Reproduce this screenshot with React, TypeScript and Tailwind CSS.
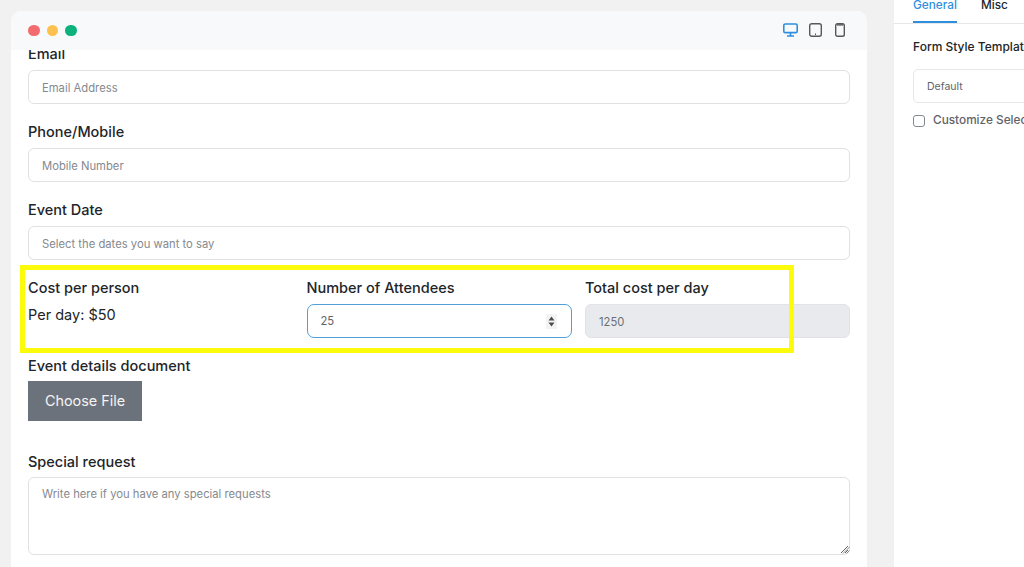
import React from 'react';

const inputClass =
  'block w-full h-[34px] px-[13px] pt-[1px] bg-white border border-[#dfe1e5] rounded-[6px] text-[11.25px] text-[#6b7075] placeholder:text-[#85898e] outline-none';
const labelClass = 'block h-[20px] leading-[20px] mb-[6px] text-[14.5px] font-medium text-[#212529]';

const fields = [
  { label: 'Email', placeholder: 'Email Address' },
  { label: 'Phone/Mobile', placeholder: 'Mobile Number' },
  { label: 'Event Date', placeholder: 'Select the dates you want to say' },
];

const App: React.FC = () => {
  return (
    <div className="relative flex h-[567px] w-[1024px] overflow-hidden bg-[#f1f1f1] font-['Inter',sans-serif]">
      <main className="ml-[11px] mt-[11px] flex w-[856px] flex-col rounded-t-[10px] bg-white">
        <header className="flex h-[39px] shrink-0 items-center justify-between rounded-t-[10px] bg-[#f8f9fa] pl-[17px] pr-[22px]">
          <div className="flex gap-[7px]">
            <span className="h-[11.5px] w-[11.5px] rounded-full bg-[#f26b6f]" />
            <span className="h-[11.5px] w-[11.5px] rounded-full bg-[#fcc14e]" />
            <span className="h-[11.5px] w-[11.5px] rounded-full bg-[#0bb27a]" />
          </div>
          <div className="-mt-[1px] flex items-center">
            <svg width="15" height="14" viewBox="0 0 15 14" fill="none" stroke="#2f8fdc" strokeWidth="1.6">
              <rect x="0.8" y="1" width="13.4" height="8.6" rx="1.4" />
              <path d="M7.5 9.6v3M4 13h7" />
            </svg>
            <svg className="ml-[11px]" width="13" height="14" viewBox="0 0 13 14" fill="none" stroke="#55595e" strokeWidth="1.4">
              <rect x="0.7" y="0.7" width="11.6" height="12.6" rx="2" />
              <path d="M6 11.2h1" />
            </svg>
            <svg className="ml-[13px]" width="10" height="14" viewBox="0 0 10 14" fill="none" stroke="#55595e" strokeWidth="1.4">
              <rect x="0.7" y="0.7" width="8.6" height="12.6" rx="1.8" />
              <path d="M2 1.9h6" />
            </svg>
          </div>
        </header>

        <div className="flex-1 overflow-hidden px-[17px]">
          <form className="-mt-[6px]">
            {fields.map((field) => (
              <div key={field.label} className="mb-[18px]">
                <label className={labelClass}>{field.label}</label>
                <input className={inputClass} placeholder={field.placeholder} />
              </div>
            ))}

            <div className="mb-[18px] grid grid-cols-3 gap-[13.5px]">
              <div>
                <label className={labelClass}>Cost per person</label>
                <p className="text-[14.5px] leading-[22px] text-[#212529]">Per day: $50</p>
              </div>
              <div>
                <label className={labelClass}>Number of Attendees</label>
                <div className="flex h-[34px] items-center justify-between rounded-[7px] border border-[#4f9fd8] bg-white pl-[13px] pr-[14px] pt-[1px] text-[11.25px] text-[#5f6368]">
                  <span>25</span>
                  <svg width="11" height="15" viewBox="0 0 11 15">
                    <rect width="11" height="15" fill="#f3f3f3" />
                    <path d="M5.5 2.5 8.5 6.5h-6zM5.5 12.5 2.5 8.5h6z" fill="#4a4d50" />
                  </svg>
                </div>
              </div>
              <div>
                <label className={labelClass}>Total cost per day</label>
                <input
                  className="block h-[34px] w-full rounded-[6px] border border-[#e2e3e7] bg-[#e9eaee] px-[13px] pt-[1px] text-[11.25px] text-[#6b7075] outline-none"
                  value="1250"
                  disabled
                  readOnly
                />
              </div>
            </div>

            <div className="mb-[31px]">
              <label className="mb-[5px] block h-[20px] text-[14.5px] font-medium leading-[20px] text-[#212529]">
                Event details document
              </label>
              <button
                type="button"
                className="h-[40px] w-[114px] bg-[#6c727b] text-[14.4px] text-[#f4f4f5]"
              >
                Choose File
              </button>
            </div>

            <div>
              <label className="mb-[5px] block h-[20px] text-[14.5px] font-medium leading-[20px] text-[#212529]">
                Special request
              </label>
              <textarea
                className="block h-[78px] w-full rounded-[6px] border border-[#dfe1e5] bg-white px-[13px] py-[8px] text-[11.25px] placeholder:text-[#85898e] outline-none"
                placeholder="Write here if you have any special requests"
              />
            </div>
          </form>
        </div>
      </main>

      <aside className="ml-[27px] flex-1 overflow-hidden bg-white">
        <div className="flex h-[24px] items-end gap-[24px] whitespace-nowrap border-b border-[#e5e7eb] pl-[19px] text-[11.8px] font-medium">
          <span className="h-[22px] border-b-2 border-[#2f8fdc] text-[#2f8fdc]">
            <span className="relative -top-[5px] block leading-[18px]">General</span>
          </span>
          <span className="h-[22px] text-[#212529]">
            <span className="relative -top-[5px] block leading-[18px]">Misc</span>
          </span>
        </div>
        <div className="w-[200px] pl-[19px] pt-[15px]">
          <p className="h-[16px] whitespace-nowrap text-[12px] font-medium leading-[16px] text-[#212529]">
            Form Style Template
          </p>
          <div className="mt-[14px] flex h-[34px] w-[181px] items-center rounded-l-[5px] border border-[#e5e7eb] px-[13px] pt-[1px] text-[10.5px] text-[#5f6368]">
            Default
          </div>
          <label className="mt-[9px] flex items-center gap-[8px] whitespace-nowrap text-[11.8px] font-medium text-[#5f6368]">
            <span className="h-[12px] w-[12px] shrink-0 rounded-[3px] border border-[#85898e]" />
            Customize Selected Form
          </label>
        </div>
      </aside>

      <div className="absolute left-[20px] top-[265px] h-[88px] w-[774px] border-[5px] border-[#fbfb0b]" />
      <svg className="absolute left-[842px] top-[546px]" width="8" height="8" viewBox="0 0 8 8">
        <path d="M1 7.5 7.5 1M4.5 7.5 7.5 4.5" stroke="#8b8b8b" strokeWidth="1" />
      </svg>
    </div>
  );
};

export default App;
